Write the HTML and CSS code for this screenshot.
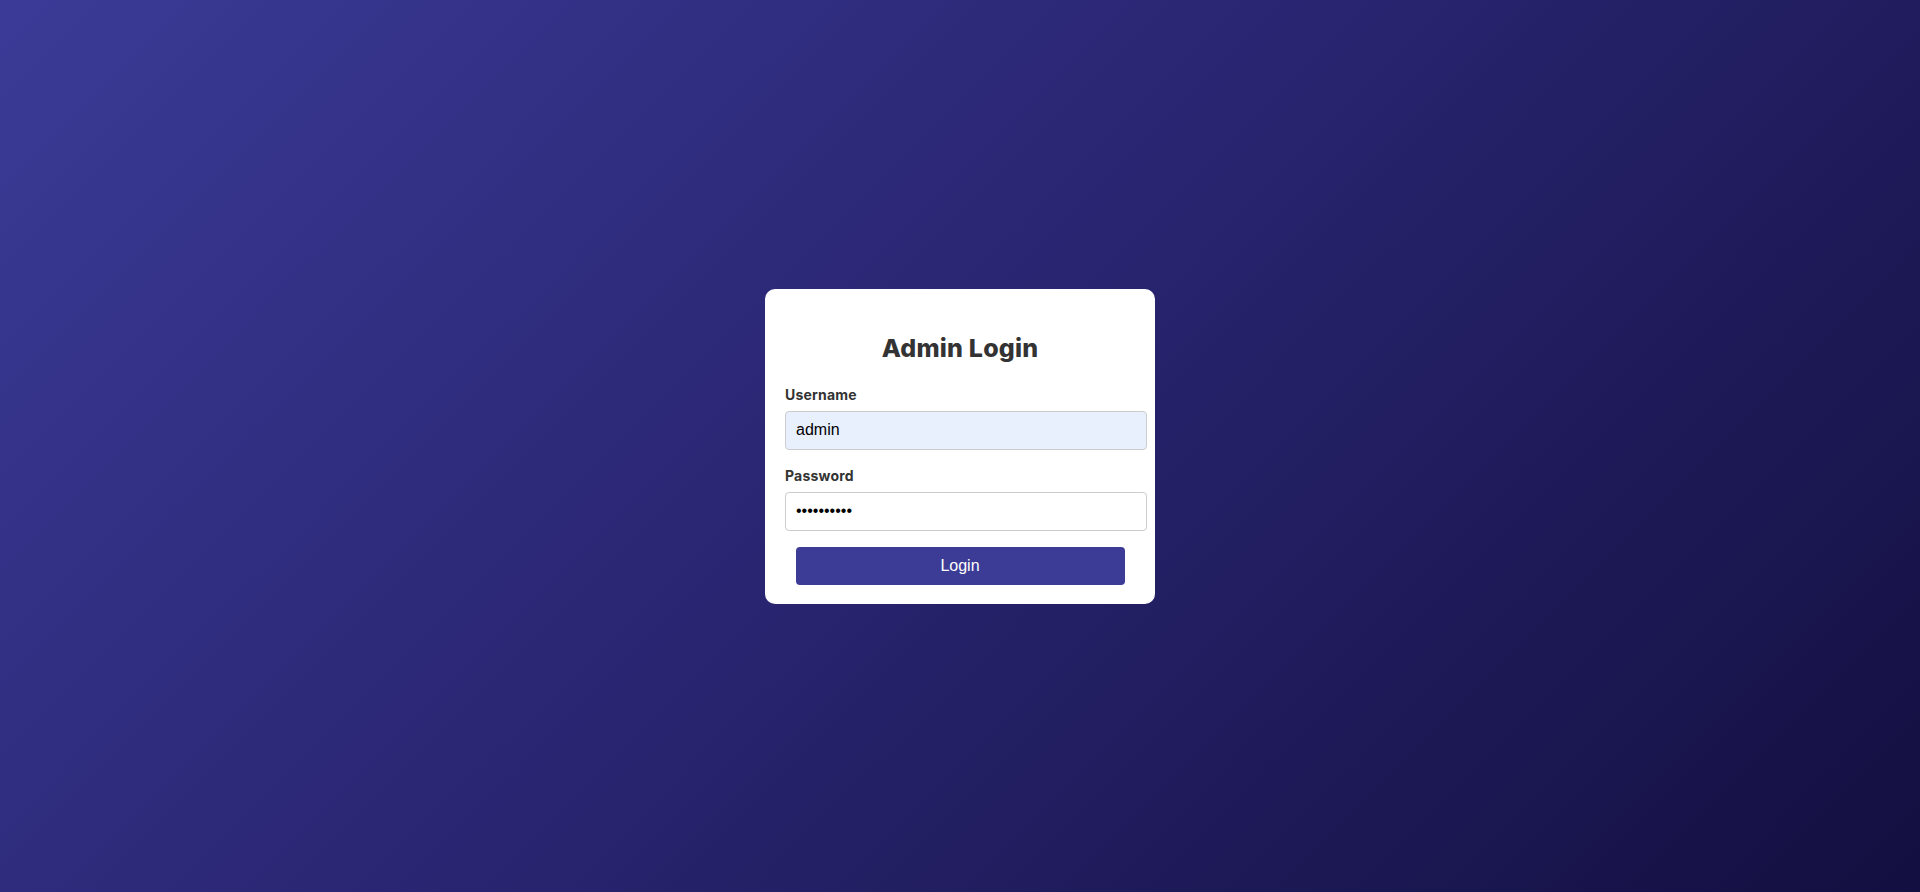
FILE: index.html
```html
<!DOCTYPE html>
<html lang="en">
<head>
<meta charset="utf-8">
<title>Admin Login</title>
<link rel="stylesheet" href="styles.css">
</head>
<body>
<main class="page">
  <form class="card">
    <h2 class="title">Admin Login</h2>
    <label class="label" for="username">Username</label>
    <input class="field field-filled" id="username" type="text" value="admin">
    <label class="label label-second" for="password">Password</label>
    <input class="field" id="password" type="password" value="adminadmin">
    <button class="btn" type="button">Login</button>
  </form>
</main>
</body>
</html>
```
FILE: styles.css
```css
* { box-sizing: border-box; }
html, body { margin: 0; height: 100%; }
body {
  background: linear-gradient(135deg, #3b3b97 0%, #2a2673 45%, #130f40 100%);
  font-family: "Liberation Sans", Arial, sans-serif;
}
.page {
  height: 100vh;
  display: flex;
  align-items: center;
  justify-content: center;
}
.card {
  width: 390px;
  background: #ffffff;
  border-radius: 10px;
  padding: 20px 20px 19px;
  display: flex;
  flex-direction: column;
}
.title {
  margin: 21px 0 19px;
  font-family: Inter, "Open Sans", sans-serif;
  font-weight: 800;
  font-size: 25px;
  line-height: 36px;
  letter-spacing: 0.2px;
  color: #333333;
  text-align: center;
}
.label {
  font-family: Inter, "Open Sans", sans-serif;
  font-weight: 700;
  font-size: 14px;
  line-height: 20px;
  letter-spacing: 0.2px;
  color: #333333;
  margin-bottom: 6px;
}
.label-second { margin-top: 16px; }
.field {
  width: 362px;
  height: 39px;
  padding: 0 10px;
  border: 1px solid #cccccc;
  border-radius: 4px;
  background: #ffffff;
  font-family: "Liberation Sans", Arial, sans-serif;
  font-size: 16px;
  color: #000000;
  outline: none;
}
.field-filled { background: #e8f0fe; }
.btn {
  align-self: center;
  width: 329px;
  height: 38px;
  margin-top: 16px;
  border: none;
  border-radius: 4px;
  background: #3c3c96;
  color: #ffffff;
  font-family: "Liberation Sans", Arial, sans-serif;
  font-size: 16px;
  cursor: pointer;
}
```
